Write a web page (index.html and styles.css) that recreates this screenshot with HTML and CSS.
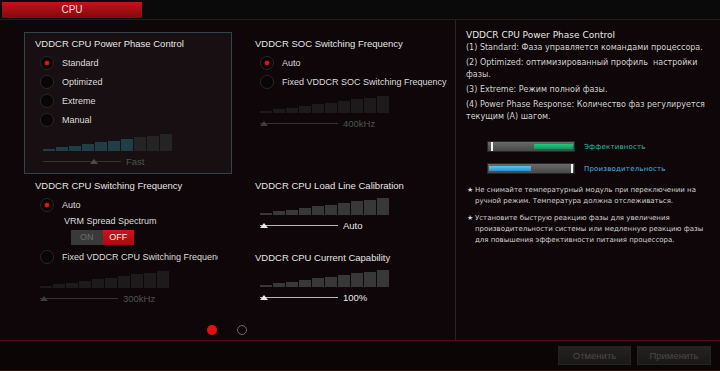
FILE: index.html
```html
<!DOCTYPE html>
<html lang="ru">
<head>
    <meta charset="UTF-8">
    <title>CPU</title>
    <link rel="stylesheet" href="styles.css">
</head>
<body>
    <div class="topbar">
        <div class="tab">CPU</div>
    </div>

    <div class="main">
        <div class="settings">
            <div class="grid">
                <!-- power phase -->
                <section class="group boxed">
                    <h2 class="title">VDDCR CPU Power Phase Control</h2>
                    <ul class="radios">
                        <li class="radio checked"><span class="dot"></span>Standard</li>
                        <li class="radio"><span class="dot"></span>Optimized</li>
                        <li class="radio"><span class="dot"></span>Extreme</li>
                        <li class="radio"><span class="dot"></span>Manual</li>
                    </ul>
                    <div class="slider teal">
                        <div class="steps"><i class="on"></i><i class="on"></i><i class="on"></i><i class="on"></i><i class="on"></i><i class="on"></i><i class="on"></i><i></i><i></i><i></i></div>
                        <div class="track"><span class="line"><b class="thumb" style="left: 60%"></b></span><span class="value">Fast</span></div>
                    </div>
                </section>

                <!-- soc frequency -->
                <section class="group">
                    <h2 class="title">VDDCR SOC Switching Frequency</h2>
                    <ul class="radios">
                        <li class="radio checked"><span class="dot"></span>Auto</li>
                        <li class="radio"><span class="dot"></span>Fixed VDDCR SOC Switching Frequency</li>
                    </ul>
                    <div class="slider">
                        <div class="steps"><i></i><i></i><i></i><i></i><i></i><i></i><i></i><i></i><i></i><i></i></div>
                        <div class="track"><span class="line"><b class="thumb"></b></span><span class="value">400kHz</span></div>
                    </div>
                </section>

                <!-- cpu frequency -->
                <section class="group">
                    <h2 class="title">VDDCR CPU Switching Frequency</h2>
                    <ul class="radios">
                        <li class="radio checked"><span class="dot"></span>Auto</li>
                    </ul>
                    <div class="sub-label">VRM Spread Spectrum</div>
                    <div class="toggle"><span class="opt">ON</span><span class="opt sel">OFF</span></div>
                    <ul class="radios fixed">
                        <li class="radio"><span class="dot"></span><span class="clip">Fixed VDDCR CPU Switching Frequency</span></li>
                    </ul>
                    <div class="slider">
                        <div class="steps"><i></i><i></i><i></i><i></i><i></i><i></i><i></i><i></i><i></i><i></i></div>
                        <div class="track"><span class="line"><b class="thumb"></b></span><span class="value">300kHz</span></div>
                    </div>
                </section>

                <!-- llc / current -->
                <section class="group">
                    <h2 class="title">VDDCR CPU Load Line Calibration</h2>
                    <div class="slider active">
                        <div class="steps"><i></i><i></i><i></i><i></i><i></i><i></i><i></i><i></i><i></i><i></i></div>
                        <div class="track"><span class="line"><b class="thumb"></b></span><span class="value">Auto</span></div>
                    </div>
                    <h2 class="title second">VDDCR CPU Current Capability</h2>
                    <div class="slider active">
                        <div class="steps"><i></i><i></i><i></i><i></i><i></i><i></i><i></i><i></i><i></i><i></i></div>
                        <div class="track"><span class="line"><b class="thumb"></b></span><span class="value">100%</span></div>
                    </div>
                </section>
            </div>

            <div class="pager">
                <span class="page on"></span>
                <span class="page"></span>
            </div>
        </div>

        <aside class="help">
            <h3>VDDCR CPU Power Phase Control</h3>
            <p>(1) Standard: Фаза управляется командами процессора.</p>
            <p>(2) Optimized: оптимизированный профиль&nbsp; настройки<br>фазы.</p>
            <p>(3) Extreme: Режим полной фазы.</p>
            <p>(4) Power Phase Response: Количество фаз регулируется<br>текущим (А) шагом.</p>

            <div class="gauges">
                <div class="gauge">
                    <div class="bar"><span class="fill green"></span><span class="mark" style="left: 3px"></span></div>
                    <span class="gauge-label green-text">Эффективность</span>
                </div>
                <div class="gauge">
                    <div class="bar"><span class="fill blue"></span><span class="mark" style="left: 83px"></span></div>
                    <span class="gauge-label blue-text">Производительность</span>
                </div>
            </div>

            <div class="note"><span class="star">★</span><span>Не снимайте температурный модуль при переключении на<br>ручной режим. Температура должна отслеживаться.</span></div>
            <div class="note"><span class="star">★</span><span>Установите быструю реакцию фазы для увеличения<br>производительности системы или медленную реакцию фазы<br>для повышения эффективности питания процессора.</span></div>
        </aside>
    </div>

    <div class="footer">
        <button class="btn">Отменить</button>
        <button class="btn wide">Применить</button>
    </div>
</body>
</html>
```

FILE: styles.css
```css
* {
    box-sizing: border-box;
}

body {
    margin: 0;
    width: 720px;
    height: 371px;
    overflow: hidden;
    background-color: #0e0608;
    color: #d8d8d8;
    font-family: "Liberation Sans", Arial, sans-serif;
}

/* top tab bar */
.topbar {
    height: 20px;
    padding: 2px 0 0 2px;
    background-color: #0b0a0a;
    border-bottom: 1px solid #4e0a0c;
}

.tab {
    width: 140px;
    height: 16px;
    background: linear-gradient(#c4121b, #820a0f);
    color: #f3dcdc;
    font-size: 10px;
    line-height: 16px;
    text-align: center;
}

.main {
    display: flex;
    height: 321px;
    border-bottom: 1px solid #560b0d;
}

.settings {
    display: flex;
    flex-direction: column;
    width: 456px;
    padding: 12px 0 0 24px;
    border-right: 1px solid #2a2426;
}

.grid {
    display: grid;
    grid-template-columns: 208px 208px;
    column-gap: 12px;
}

.group {
    padding: 6px 10px 0 11px;
}

.boxed {
    height: 142px;
    padding: 5px 10px 0 10px;
    border: 1px solid #34434a;
    background-color: #170f12;
}

.title {
    margin: 0 0 3px;
    font-size: 9.5px;
    font-weight: normal;
    line-height: 12px;
    color: #e4e4e4;
    white-space: nowrap;
}

.title.second {
    margin-top: 21px;
}

/* radios */
.radios {
    list-style: none;
    margin: 0;
    padding: 0 0 0 5px;
}

.radio {
    display: flex;
    align-items: center;
    height: 19px;
    font-size: 9px;
    color: #dcdcdc;
    white-space: nowrap;
}

.dot {
    position: relative;
    flex: none;
    width: 14px;
    height: 14px;
    margin-right: 8px;
    border: 1px solid #2c2628;
    border-radius: 50%;
    background-color: #0a0607;
    box-shadow: inset 0 1px 2px #000;
}

.checked .dot::after {
    content: "";
    position: absolute;
    left: 4px;
    top: 4px;
    width: 4px;
    height: 4px;
    border-radius: 50%;
    background-color: #f01212;
    box-shadow: 0 0 2px #ff2020;
}

.clip {
    display: block;
    max-width: 156px;
    overflow: hidden;
}

.sub-label {
    margin-top: 1px;
    padding-left: 29px;
    font-size: 9px;
    line-height: 12px;
    color: #dcdcdc;
}

.toggle {
    display: flex;
    width: 63px;
    height: 15px;
    margin: 3px 0 0 36px;
    font-size: 9px;
}

.toggle .opt {
    flex: 1;
    line-height: 15px;
    text-align: center;
    background-color: #3a3939;
    color: #6c6c6c;
}

.toggle .sel {
    background: linear-gradient(#d2121b, #a80b12);
    color: #f4f4f4;
}

.radios.fixed {
    margin-top: 2px;
}

/* step sliders */
.slider {
    margin: 5px 0 0 5px;
}

.slider.teal {
    margin-left: 8px;
}

.group > .slider.active {
    margin-top: 6px;
}

.steps {
    display: flex;
    align-items: flex-end;
    gap: 1px;
    width: 129px;
    height: 17px;
}

.steps i {
    flex: 1;
    background-color: #1d1a1b;
}

.steps i:nth-child(1) { height: 2px; }
.steps i:nth-child(2) { height: 4px; }
.steps i:nth-child(3) { height: 5px; }
.steps i:nth-child(4) { height: 7px; }
.steps i:nth-child(5) { height: 9px; }
.steps i:nth-child(6) { height: 10px; }
.steps i:nth-child(7) { height: 12px; }
.steps i:nth-child(8) { height: 14px; }
.steps i:nth-child(9) { height: 15px; }
.steps i:nth-child(10) { height: 17px; }

.teal .steps i {
    background-color: #242424;
}

.teal .steps i.on {
    background-color: #203e48;
}

.active .steps i {
    background-color: #383838;
}

.track {
    display: flex;
    align-items: center;
    height: 12px;
    margin-top: 4px;
}

.line {
    position: relative;
    width: 78px;
    height: 1px;
    background-color: #333;
}

.thumb {
    position: absolute;
    left: 0;
    bottom: -2px;
    width: 0;
    height: 0;
    border-left: 4px solid transparent;
    border-right: 4px solid transparent;
    border-bottom: 5px solid #3c3c3c;
}

.value {
    margin-left: 5px;
    font-size: 9.5px;
    color: #525252;
}

.teal .thumb {
    border-bottom-color: #4c4c4c;
}

.active .line {
    background-color: #b8b8b8;
}

.active .thumb {
    border-bottom-color: #e8e8e8;
}

.active .value {
    color: #e6e6e6;
}

/* page dots */
.pager {
    display: flex;
    gap: 20px;
    margin: auto 0 5px 183px;
}

.page {
    width: 10px;
    height: 10px;
    border-radius: 50%;
    border: 1.5px solid #6a6a6a;
}

.page.on {
    border: none;
    background-color: #e01212;
}

/* help panel */
.help {
    flex: 1;
    padding: 9px 10px 0 10px;
    font-family: "DejaVu Sans", sans-serif;
    color: #d2d2d2;
}

.help h3 {
    margin: 0 0 1px;
    font-size: 9px;
    font-weight: normal;
    line-height: 12px;
    color: #e6e6e6;
}

.help p {
    margin: 0 0 3px;
    font-size: 8px;
    line-height: 12px;
    white-space: nowrap;
}

.gauges {
    margin: 18px 0 0 21px;
}

.gauge {
    display: flex;
    align-items: center;
    height: 11px;
    margin-bottom: 11px;
}

.bar {
    position: relative;
    width: 88px;
    height: 11px;
    border: 1px solid #262626;
    background: linear-gradient(#6a6a6a, #474747);
}

.fill {
    position: absolute;
    top: 2px;
    bottom: 2px;
}

.fill.green {
    left: 46px;
    right: 1px;
    background: linear-gradient(#22c87e, #0e9a5a);
}

.fill.blue {
    left: 1px;
    width: 42px;
    background: linear-gradient(#5cc4ee, #2a94c8);
}

.mark {
    position: absolute;
    top: 0;
    bottom: 0;
    width: 2px;
    background-color: #f4f4f4;
}

.gauge-label {
    margin-left: 9px;
    font-size: 7px;
    letter-spacing: 0.2px;
}

.green-text {
    color: #20c4a0;
}

.blue-text {
    color: #42b6e6;
}

.note {
    display: flex;
    margin-top: 6px;
    font-size: 7px;
    line-height: 11px;
    white-space: nowrap;
}

.gauges + .note {
    margin-top: 3px;
}

.star {
    flex: none;
    width: 9px;
    padding-left: 1px;
}

/* bottom buttons */
.footer {
    display: flex;
    justify-content: flex-end;
    align-items: center;
    gap: 6px;
    height: 30px;
    padding-right: 9px;
    background-color: #0b0506;
    border-bottom: 1px solid #3c0709;
}

.btn {
    width: 73px;
    height: 19px;
    border: 1px solid #262324;
    background: linear-gradient(#242121, #1a1818);
    color: #4c4747;
    font-family: "Liberation Sans", Arial, sans-serif;
    font-size: 9.5px;
}

.btn.wide {
    width: 74px;
}
```
